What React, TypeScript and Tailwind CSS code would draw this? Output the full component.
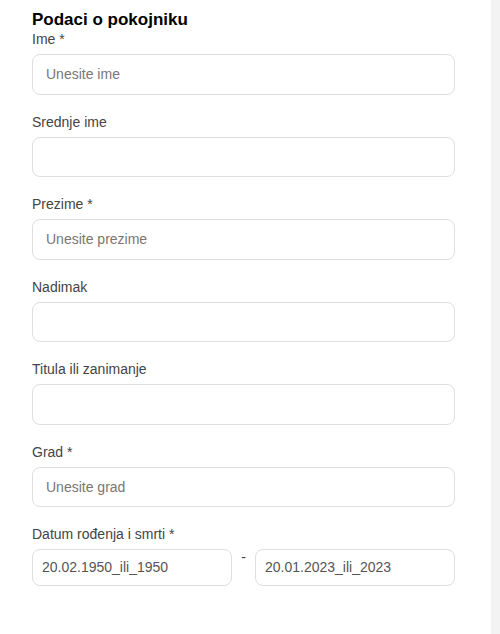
const fields = [
  { label: 'Ime *', placeholder: 'Unesite ime' },
  { label: 'Srednje ime', placeholder: '' },
  { label: 'Prezime *', placeholder: 'Unesite prezime' },
  { label: 'Nadimak', placeholder: '' },
  { label: 'Titula ili zanimanje', placeholder: '' },
  { label: 'Grad *', placeholder: 'Unesite grad' },
]

export default function App() {
  return (
    <div className="flex h-[634px] w-[500px] bg-white" style={{ fontFamily: '"Liberation Sans", Arial, sans-serif' }}>
      <div className="w-[491px] pl-8 pt-[11px]">
        <h2 className="text-[17px] leading-[18px] font-bold text-black">Podaci o pokojniku</h2>
        <div className="w-[423px]">
          {fields.map(f => (
            <div key={f.label} className="mb-[17px]">
              <label className="block text-[14px] leading-[20px] text-[#444] mb-[5px]">{f.label}</label>
              <input
                type="text"
                placeholder={f.placeholder}
                className="block w-full h-[40.5px] rounded-lg border border-[#dedede] bg-white px-[13px] text-[14px] text-[#444] placeholder:text-[#777] outline-none"
              />
            </div>
          ))}

          {/* birth - death */}
          <div>
            <label className="block text-[14px] leading-[20px] text-[#444] mb-[5px]">Datum rođenja i smrti *</label>
            <div className="flex">
              <input
                type="text"
                defaultValue="20.02.1950_ili_1950"
                className="block w-[200px] h-[36.5px] rounded-lg border border-[#dedede] bg-white px-[9px] text-[14px] text-[#555] outline-none"
              />
              <span className="w-[23px] text-center text-[14px] leading-[16px] text-[#444]">-</span>
              <input
                type="text"
                defaultValue="20.01.2023_ili_2023"
                className="block w-[200px] h-[36.5px] rounded-lg border border-[#dedede] bg-white px-[9px] text-[14px] text-[#555] outline-none"
              />
            </div>
          </div>
        </div>
      </div>
      <div className="flex-1 bg-[#f3f3f3]" />
    </div>
  )
}
